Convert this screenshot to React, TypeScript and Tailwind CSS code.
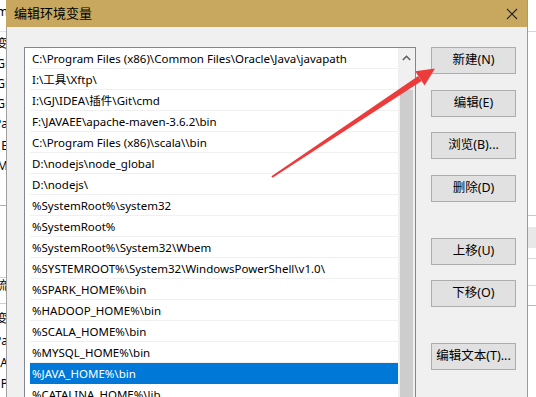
import React from "react";

const rows = [
  "C:\\Program Files (x86)\\Common Files\\Oracle\\Java\\javapath",
  "I:\\工具\\Xftp\\",
  "I:\\GJ\\IDEA\\插件\\Git\\cmd",
  "F:\\JAVAEE\\apache-maven-3.6.2\\bin",
  "C:\\Program Files (x86)\\scala\\\\bin",
  "D:\\nodejs\\node_global",
  "D:\\nodejs\\",
  "%SystemRoot%\\system32",
  "%SystemRoot%",
  "%SystemRoot%\\System32\\Wbem",
  "%SYSTEMROOT%\\System32\\WindowsPowerShell\\v1.0\\",
  "%SPARK_HOME%\\bin",
  "%HADOOP_HOME%\\bin",
  "%SCALA_HOME%\\bin",
  "%MYSQL_HOME%\\bin",
  "%JAVA_HOME%\\bin",
  "%CATALINA_HOME%\\lib",
];

const font = { fontFamily: '"Noto Sans", "Noto Sans CJK SC", sans-serif' };

function Btn({ label, className = "" }: { label: string; className?: string }) {
  return (
    <div
      className={
        "h-[27px] w-[85px] shrink-0 border border-[#adadad] bg-[#e1e1e1] flex items-center justify-center text-[12.5px] text-black " +
        className
      }
    >
      {label}
    </div>
  );
}

const leftBits: [number, string][] = [
  [4, "m"],
  [36, "变"],
  [56, "Gi"],
  [76, "Gi"],
  [96, "Gi"],
  [116, "Pa"],
  [138, "E"],
  [158, "M"],
  [278, "流"],
  [311, "变"],
  [333, "Pa"],
  [355, "A"],
  [376, "P"],
];

export default function App() {
  return (
    <div
      className="relative w-[536px] h-[397px] overflow-hidden bg-white flex"
      style={font}
    >
      {/* left background window strip */}
      <div className="relative w-[6px] shrink-0 bg-white overflow-hidden">
        <div className="absolute left-0 right-0 top-[31px] h-px bg-[#e5e5e5]" />
        <div className="absolute left-0 right-0 top-[205px] h-px bg-[#b0b0b0]" />
        <div className="absolute left-0 right-0 top-[277px] h-px bg-[#d0d0d0]" />
        <div className="absolute left-0 right-0 top-[303px] h-px bg-[#d0d0d0]" />
        {leftBits.map(([y, t], i) => (
          <div
            key={i}
            className="absolute right-[-2px] flex justify-end whitespace-nowrap text-[12px] text-black leading-[16px]"
            style={{ top: y }}
          >
            {t}
          </div>
        ))}
      </div>

      {/* dialog */}
      <div className="w-[522px] shrink-0 flex flex-col border-r border-[#9a9a9a]">
        <div className="h-[27px] shrink-0 bg-[#c8a85e] flex items-center justify-between pl-[8px] pr-[8px]">
          <span className="text-[13px] text-black">编辑环境变量</span>
          <svg width="12" height="12" viewBox="0 0 12 12" className="mr-[1px]">
            <path d="M1 1 L11 11 M11 1 L1 11" stroke="#222" strokeWidth="1.1" />
          </svg>
        </div>
        <div className="flex-1 flex bg-[#f0f0f0] border-l border-[#a0a0a0] pl-[17px] pt-[20px]">
          {/* list box */}
          <div className="w-[392px] h-[400px] shrink-0 border border-[#828790] bg-white flex">
            <div className="flex-1 pl-[5px]">
              {rows.map((r, i) => (
                <div
                  key={i}
                  className={
                    "h-[21px] border-b pl-[2px] pt-[2px] flex items-center whitespace-nowrap text-[11.5px] " +
                    (i === 15
                      ? "bg-[#0078d7] text-white border-[#0078d7]"
                      : "text-black border-[#f0f0f0]")
                  }
                >
                  {r}
                </div>
              ))}
            </div>
            {/* scrollbar */}
            <div className="w-[17px] shrink-0 bg-[#f0f0f0] flex flex-col items-center">
              <div className="h-[42px] w-full flex items-start justify-center pt-[7px]">
                <svg width="9" height="6" viewBox="0 0 9 6">
                  <path d="M0.8 5 L4.5 1.3 L8.2 5" stroke="#606060" strokeWidth="1.6" fill="none" />
                </svg>
              </div>
              <div className="w-[13px] flex-1 bg-[#cdcdcd]" />
            </div>
          </div>

          {/* buttons */}
          <div className="ml-[15px] flex flex-col">
            <Btn label="新建(N)" />
            <Btn label="编辑(E)" className="mt-[16px]" />
            <Btn label="浏览(B)..." className="mt-[15px]" />
            <Btn label="删除(D)" className="mt-[16px]" />
            <Btn label="上移(U)" className="mt-[36px]" />
            <Btn label="下移(O)" className="mt-[15px]" />
            <Btn label="编辑文本(T)..." className="mt-[36px]" />
          </div>
        </div>
      </div>

      {/* right background strip */}
      <div className="relative flex-1 bg-white">
        <div className="absolute left-0 right-0 top-[31px] h-px bg-[#d8d8d8]" />
        <div className="absolute left-0 right-0 top-[215px] h-px bg-[#c8c8c8]" />
        <div className="absolute left-0 right-0 top-[227px] h-[21px] bg-[#e8e8e8]" />
        <div className="absolute left-0 right-0 top-[258px] h-px bg-[#d8d8d8]" />
        <div className="absolute left-0 right-0 top-[285px] h-px bg-[#d8d8d8]" />
        <div className="absolute left-0 right-0 top-[305px] h-px bg-[#b8b8b8]" />
      </div>

      {/* red arrow overlay */}
      <svg
        className="absolute left-0 top-0 pointer-events-none"
        width="536"
        height="397"
        viewBox="0 0 536 397"
      >
        <polygon
          points="271.4,176.2 272.6,177.8 421.6,80.9 418.2,75.9"
          fill="#ec3b3b"
        />
        <polygon points="435,68.5 424.6,85.5 415.2,71.3" fill="#ec3b3b" />
      </svg>
    </div>
  );
}
